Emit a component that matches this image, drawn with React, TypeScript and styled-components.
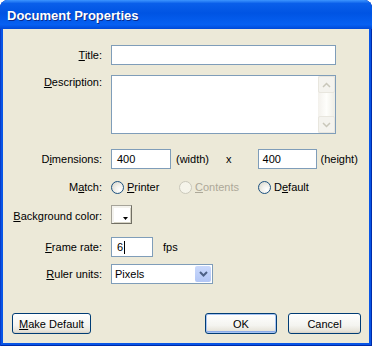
import React from 'react';
import styled, { createGlobalStyle } from 'styled-components';

const GlobalStyle = createGlobalStyle`
  html, body {
    margin: 0;
    padding: 0;
    background: #ffffff;
  }
  body {
    font-family: "Liberation Sans", Arial, sans-serif;
    font-size: 11px;
    color: #000000;
  }
`;

const Window = styled.div`
  width: 372px;
  height: 346px;
  display: flex;
  flex-direction: column;
  background: #0855e6;
  border-radius: 8px 8px 0 0;
  overflow: hidden;
  box-shadow: inset 1px 0 #0a3cc9, inset -1px 0 #002ba8, inset 0 -1px #002ba8;
`;

const TitleBar = styled.div`
  height: 29px;
  flex-shrink: 0;
  display: flex;
  align-items: center;
  padding: 1px 0 0 7px;
  box-sizing: border-box;
  background: linear-gradient(
    to bottom,
    #3d95ff 0%,
    #0a5fea 12%,
    #0054e3 45%,
    #0660f2 85%,
    #0049d8 100%
  );
  color: #ffffff;
  font-weight: bold;
  font-size: 13px;
  text-shadow: 1px 1px #0a2a8a;
`;

const Body = styled.div`
  flex: 1;
  margin: 0 3px 3px;
  background: #ece9d8;
  display: flex;
  flex-direction: column;
`;

const Form = styled.div`
  padding: 0 33px 0 0;
  display: flex;
  flex-direction: column;
`;

const Row = styled.div<{ $top: number; $h: number; $align?: string }>`
  display: flex;
  align-items: ${(p) => p.$align || 'center'};
  margin-top: ${(p) => p.$top}px;
  height: ${(p) => p.$h}px;
`;

const Label = styled.div<{ $pad?: number }>`
  width: 99px;
  margin-right: 9px;
  flex-shrink: 0;
  text-align: right;
  white-space: nowrap;
  padding-top: ${(p) => p.$pad || 0}px;
`;

const Key = styled.span`
  text-decoration: underline;
`;

const Field = styled.div<{ $w: number; $h?: number; $pad?: number; $ml?: number }>`
  box-sizing: border-box;
  width: ${(p) => p.$w}px;
  height: ${(p) => p.$h || 20}px;
  margin-left: ${(p) => p.$ml || 0}px;
  border: 1px solid #7f9db9;
  background: #ffffff;
  padding-left: ${(p) => p.$pad ?? 4}px;
  display: flex;
  align-items: center;
  flex-shrink: 0;
`;

const TextArea = styled(Field)`
  justify-content: flex-end;
  align-items: stretch;
  padding: 0;
`;

const ScrollBar = styled.div`
  width: 17px;
  display: flex;
  flex-direction: column;
  justify-content: space-between;
  background: linear-gradient(to right, #f3f1ec, #fefefb 50%, #eeede5);
`;

const ScrollButton = styled.div`
  box-sizing: border-box;
  width: 17px;
  height: 17px;
  border: 1px solid #e8e6de;
  border-radius: 2px;
  background: #f4f3ee;
  display: flex;
  align-items: center;
  justify-content: center;
`;

const Text = styled.span<{ $ml?: number; $muted?: boolean }>`
  margin-left: ${(p) => p.$ml || 0}px;
  color: ${(p) => (p.$muted ? '#aca899' : '#000000')};
  white-space: nowrap;
`;

const RadioGroup = styled.div`
  display: grid;
  grid-template-columns: 68px 79px auto;
  align-items: center;
`;

const RadioOption = styled.div`
  display: flex;
  align-items: center;
`;

const RadioCircle = styled.span<{ $disabled?: boolean }>`
  box-sizing: border-box;
  width: 13px;
  height: 13px;
  border-radius: 50%;
  border: 1px solid ${(p) => (p.$disabled ? '#cac8bb' : '#1c5180')};
  background: ${(p) =>
    p.$disabled
      ? '#f5f4ea'
      : 'radial-gradient(circle at 70% 70%, #ffffff 0%, #f2f1ec 40%, #d5d3c8 100%)'};
  margin-right: 3px;
`;

const Swatch = styled.div`
  box-sizing: border-box;
  width: 21px;
  height: 19px;
  border: 1px solid #a5a399;
  border-right-color: #716f64;
  border-bottom-color: #716f64;
  background: #ffffff;
  box-shadow: inset 2px 2px #f4f3ee, inset -1px -1px #d6d3c4;
  display: flex;
  align-items: flex-end;
  justify-content: flex-end;
  padding: 0 3px 3px 0;
`;

const Caret = styled.span`
  width: 1px;
  height: 13px;
  background: #000000;
  margin-left: 1px;
`;

const DropButton = styled.div`
  width: 16px;
  height: 16px;
  margin: 1px;
  margin-left: auto;
  border-radius: 2px;
  background: linear-gradient(to bottom, #cad9fc, #b2c6f5);
  display: flex;
  align-items: center;
  justify-content: center;
`;

const Footer = styled.div`
  margin-top: auto;
  display: flex;
  align-items: flex-end;
  padding: 0 8px 9px 9px;
`;

const Spacer = styled.div`
  flex: 1;
`;

const Button = styled.button<{ $w: number; $ml?: number; $default?: boolean }>`
  box-sizing: border-box;
  width: ${(p) => p.$w}px;
  height: 21px;
  margin-left: ${(p) => p.$ml || 0}px;
  border: 1px solid #003c74;
  border-radius: 3px;
  background: linear-gradient(to bottom, #ffffff 0%, #f4f4f0 60%, #e6e3d9 90%, #d6d0c5 100%);
  box-shadow: ${(p) =>
    p.$default ? 'inset 0 0 0 1px #a8c4f2, inset 0 -2px #8cabe8' : 'none'};
  font-family: "Liberation Sans", Arial, sans-serif;
  font-size: 11px;
  color: #000000;
  padding: 0;
`;

const Chevron: React.FC<{ up?: boolean; color: string; w?: number }> = ({ up, color, w = 1.5 }) => (
  <svg width="9" height="6" viewBox="0 0 9 6">
    <path
      d={up ? 'M1 5 L4.5 1.5 L8 5' : 'M1 1 L4.5 4.5 L8 1'}
      fill="none"
      stroke={color}
      strokeWidth={w}
    />
  </svg>
);

const Arrow = () => (
  <svg width="5" height="3" viewBox="0 0 5 3">
    <path d="M0 0 H5 L2.5 3 Z" fill="#000000" />
  </svg>
);

const Radio: React.FC<{ disabled?: boolean; children: React.ReactNode }> = ({ disabled, children }) => (
  <RadioOption>
    <RadioCircle $disabled={disabled} />
    <Text $muted={disabled}>{children}</Text>
  </RadioOption>
);

const App: React.FC = () => {
  return (
    <>
      <GlobalStyle />
      <Window>
        <TitleBar>Document Properties</TitleBar>
        <Body>
          <Form>
            <Row $top={16} $h={20}>
              <Label>
                <Key>T</Key>itle:
              </Label>
              <Field $w={225} />
            </Row>
            <Row $top={10} $h={59} $align="flex-start">
              <Label $pad={1}>
                <Key>D</Key>escription:
              </Label>
              <TextArea $w={225} $h={59}>
                <ScrollBar>
                  <ScrollButton>
                    <Chevron up color="#c9c7ba" />
                  </ScrollButton>
                  <ScrollButton>
                    <Chevron color="#c9c7ba" />
                  </ScrollButton>
                </ScrollBar>
              </TextArea>
            </Row>
            <Row $top={15} $h={20}>
              <Label>
                D<Key>i</Key>mensions:
              </Label>
              <Field $w={60} $pad={5}>400</Field>
              <Text $ml={5}>(width)</Text>
              <Text $ml={17}>x</Text>
              <Field $w={59} $pad={4} $ml={26}>
                400
              </Field>
              <Text $ml={4}>(height)</Text>
            </Row>
            <Row $top={8} $h={20}>
              <Label>
                M<Key>a</Key>tch:
              </Label>
              <RadioGroup>
                <Radio>
                  <Key>P</Key>rinter
                </Radio>
                <Radio disabled>
                  <Key>C</Key>ontents
                </Radio>
                <Radio>
                  D<Key>e</Key>fault
                </Radio>
              </RadioGroup>
            </Row>
            <Row $top={8} $h={19}>
              <Label $pad={3}>
                <Key>B</Key>ackground color:
              </Label>
              <Swatch>
                <Arrow />
              </Swatch>
            </Row>
            <Row $top={13} $h={20}>
              <Label>
                <Key>F</Key>rame rate:
              </Label>
              <Field $w={42} $pad={5}>
                6<Caret />
              </Field>
              <Text $ml={10}>fps</Text>
            </Row>
            <Row $top={7} $h={20}>
              <Label>
                <Key>R</Key>uler units:
              </Label>
              <Field $w={102} $pad={3}>
                Pixels
                <DropButton>
                  <Chevron color="#4d6185" w={2} />
                </DropButton>
              </Field>
            </Row>
          </Form>
          <Footer>
            <Button $w={79}>
              <Key>M</Key>ake Default
            </Button>
            <Spacer />
            <Button $w={72} $default>
              OK
            </Button>
            <Button $w={73} $ml={11}>
              Cancel
            </Button>
          </Footer>
        </Body>
      </Window>
    </>
  );
};

export default App;
